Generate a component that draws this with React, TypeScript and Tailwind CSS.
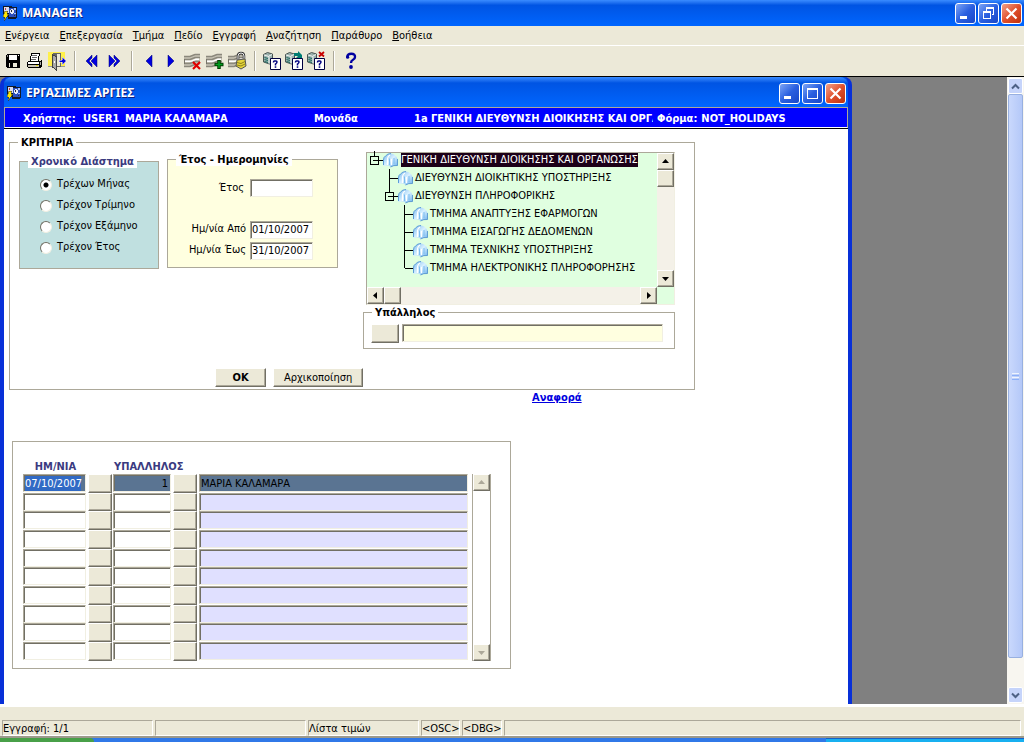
import type { ReactNode } from "react";

const raised =
  "bg-[#ece9d8] border border-t-white border-l-white border-r-[#716f64] border-b-[#716f64] shadow-[inset_-1px_-1px_0_#aca899]";
const sunken =
  "border border-t-[#aca899] border-l-[#aca899] border-r-[#f1efe2] border-b-[#f1efe2] shadow-[inset_1px_1px_0_#716f64] outline-none";

const menus = ["Ενέργεια", "Επεξεργασία", "Τμήμα", "Πεδίο", "Εγγραφή", "Αναζήτηση", "Παράθυρο", "Βοήθεια"];

const periods = ["Τρέχων Μήνας", "Τρέχον Τρίμηνο", "Τρέχον Εξάμηνο", "Τρέχον Έτος"];

const treeItems = [
  { label: "ΓΕΝΙΚΗ ΔΙΕΥΘΥΝΣΗ ΔΙΟΙΚΗΣΗΣ ΚΑΙ ΟΡΓΑΝΩΣΗΣ", level: 0, open: true },
  { label: "ΔΙΕΥΘΥΝΣΗ ΔΙΟΙΚΗΤΙΚΗΣ ΥΠΟΣΤΗΡΙΞΗΣ", level: 1 },
  { label: "ΔΙΕΥΘΥΝΣΗ ΠΛΗΡΟΦΟΡΙΚΗΣ", level: 1, open: true },
  { label: "ΤΜΗΜΑ ΑΝΑΠΤΥΞΗΣ ΕΦΑΡΜΟΓΩΝ", level: 2 },
  { label: "ΤΜΗΜΑ ΕΙΣΑΓΩΓΗΣ ΔΕΔΟΜΕΝΩΝ", level: 2 },
  { label: "ΤΜΗΜΑ ΤΕΧΝΙΚΗΣ ΥΠΟΣΤΗΡΙΞΗΣ", level: 2 },
  { label: "ΤΜΗΜΑ ΗΛΕΚΤΡΟΝΙΚΗΣ ΠΛΗΡΟΦΟΡΗΣΗΣ", level: 2, last: true },
];

const rows = Array.from({ length: 10 }, (_, i) =>
  i === 0 ? { date: "07/10/2007", id: "1", name: "ΜΑΡΙΑ ΚΑΛΑΜΑΡΑ" } : { date: "", id: "", name: "" }
);

const AppIcon = () => (
  <svg width="16" height="16" viewBox="0 0 16 16" shapeRendering="crispEdges">
    <path d="M1 1h9v1h5v11h-1v1H6v-2H2V9H1z" fill="#101828" />
    <path d="M2 2h5v6H2z" fill="#d8dcf0" />
    <path d="M7 3h7v9H7z" fill="#2c50c0" />
    <path d="M9 4h2v1h1v3h-1v1H9V8H8V5h1z" fill="#e8ecf8" />
    <path d="M9 5h1v2H9zM12 10h1v1h-1z" fill="#30303c" />
    <path d="M12 3h2v2h-2zM12 8h2v1h-2z" fill="#a8c0f8" />
    <path d="M3 3h1v2H3z" fill="#c04040" />
    <path d="M3 6h3L5 9h2l-5 7 1-4H1z" fill="#ffe600" stroke="#333" strokeWidth="0.5" />
  </svg>
);

const SaveIcon = () => (
  <svg width="20" height="20" viewBox="0 0 20 20" shapeRendering="crispEdges">
    <path d="M4 3h12l1 1v12l-1 1H4l-1-1V4z" fill="#000" />
    <path d="M6 4h8v5H6z" fill="#fff" />
    <path d="M15 4h1v1h-1z" fill="#fff" />
    <path d="M6 12h8v4H6z" fill="#ece9d8" />
    <path d="M7 12h3v4H7z" fill="#000" />
    <path d="M4 4h1v2H4z" fill="#888" />
  </svg>
);

const PrintIcon = () => (
  <svg width="20" height="20" viewBox="0 0 20 20" shapeRendering="crispEdges">
    <path d="M6.500 2.500h8l-1.500 8h-8z" fill="#fff" stroke="#000" />
    <path d="M7 4.500h5M7 6.500h5M6 8.500h5" stroke="#666" />
    <path d="M3 10h12l2-2v7l-2 2H3l-1-1v-5z" fill="#000" />
    <path d="M3 11h11v2H3z" fill="#fff" />
    <path d="M3 14h11v2H3z" fill="#c8c4b4" />
    <path d="M15 11h1v3h-1z" fill="#aaa" />
    <path d="M11 14h2v1h-2z" fill="#e5d800" />
  </svg>
);

const ExitIcon = () => (
  <svg width="20" height="20" viewBox="0 0 20 20" shapeRendering="crispEdges">
    <path d="M1 1h17v14H1z" fill="#fff04a" />
    <path d="M6 2h8v14H6z" fill="#666" />
    <path d="M10 3h3v12h-3z" fill="#ece9d8" />
    <path d="M5.500 3.500l4 2.500v13l-4-3z" fill="#a9a9a9" stroke="#444" />
    <path d="M7 10h1v2H7z" fill="#fff" />
    <path d="M1 15h4v1H1zM14 15h4v1h-4z" fill="#999" />
    <path d="M12 9h3V6l4 4-4 4v-3h-3z" fill="#0000d8" stroke="#fff" strokeWidth="0.5" />
  </svg>
);

const ArrowIcon = ({ dir, double }: { dir: "left" | "right"; double?: boolean }) => (
  <svg width="20" height="20" viewBox="0 0 20 20" className={dir === "right" ? "-scale-x-100" : ""}>
    {double ? (
      <g>
        <path d="M10 4v3l-3 3 3 3v3l-6-6z" fill="#0000e0" stroke="#000070" strokeWidth="0.5" />
        <path d="M15 4v12l-6-6z" fill="#0000e0" stroke="#000070" strokeWidth="0.5" />
      </g>
    ) : (
      <path d="M13 4v12l-6-6z" fill="#0000e0" stroke="#000070" strokeWidth="0.5" />
    )}
  </svg>
);

const RecordIcon = ({ kind }: { kind: "delete" | "insert" | "lock" }) => (
  <svg width="20" height="20" viewBox="0 0 20 20">
    <path d="M1 5h6l5-2h5v11l-6 1-4 1H1z" fill="#c8c4b6" />
    <path d="M1 5.500h6l5-2h5M1 8.500h6l5-2h5M1 12.500h6l5-2h5M1 15.500h6l5-2" fill="none" stroke="#8b887c" strokeWidth="1.500" />
    <path d="M2 9.500h6l5-2h3v1.500h-3l-5 2H2z" fill="#fff" />
    <path d="M1.500 8v5" stroke="#77746a" />
    {kind === "delete" && <path d="M10 11l7 7M17 11l-7 7" stroke="#e00000" strokeWidth="2.200" />}
    {kind === "insert" && (
      <g>
        <path d="M14 9v9M9.500 13.500h9" stroke="#003c00" strokeWidth="3.500" />
        <path d="M14 10v7M10.500 13.500h7" stroke="#00a020" strokeWidth="1.500" />
      </g>
    )}
    {kind === "lock" && (
      <g>
        <path d="M11 9V5q0-3 3-3t3 3v4" fill="none" stroke="#333" strokeWidth="2.500" />
        <path d="M11 9V5q0-3 3-3t3 3v4" fill="none" stroke="#eee" />
        <path d="M10 9l8-1 1 7-5 3-5-3z" fill="#e5d43a" stroke="#555" />
        <path d="M10 11.500l4 1 4-2M10 14l4 1 4-2" fill="none" stroke="#8b801a" />
      </g>
    )}
  </svg>
);

const QueryIcon = ({ mark }: { mark?: "run" | "cancel" }) => (
  <svg width="20" height="20" viewBox="0 0 20 20">
    <path d="M1.500 3.500l4-2 5 1.500v8l-3 2-6-2z" fill="#9ab0ac" stroke="#4a5552" />
    <path d="M2 4l5 1.500v7M7 5l3-1.500" fill="none" stroke="#eef4f2" />
    <path d="M2.500 6.500l3.500 1M2.500 8.500l3.500 1M2.500 10.500l3.500 1" stroke="#1c6b62" />
    {mark === "run" && <path d="M10 2h4V0l4 4v3h-6l2-2h-4z" fill="#007d72" />}
    {mark === "cancel" && <path d="M13 1l5 4.500M18 1l-5 4.500" stroke="#c80000" strokeWidth="1.800" />}
    <path d="M8.500 7.500h10v11h-10z" fill="#fff" stroke="#000040" />
    <path d="M11.500 11.500v-.5q0-1 1-1h1.500q1 0 1 1t-1.500 2v1.500" fill="none" stroke="#000080" strokeWidth="1.500" />
    <path d="M12.700 15.300h1.600v1.500h-1.600z" fill="#000080" />
  </svg>
);

const HelpIcon = () => (
  <svg width="20" height="20" viewBox="0 0 20 20">
    <path d="M6.300 6q0-3.300 4-3.300T14 6q0 1.800-2 2.800t-2 3.200" fill="none" stroke="#0000a0" strokeWidth="2.400" />
    <circle cx="6.600" cy="6.200" r="1.600" fill="#0000a0" />
    <circle cx="10" cy="16" r="1.900" fill="#0000a0" />
  </svg>
);

const FolderIcon = () => (
  <svg width="15" height="16" viewBox="0 0 15 16">
    <defs>
      <linearGradient id="leaf" x1="0" y1="0" x2="1" y2="1">
        <stop offset="0" stopColor="#7ebcf0" />
        <stop offset="0.5" stopColor="#d8f0ff" />
        <stop offset="1" stopColor="#6cb0ec" />
      </linearGradient>
    </defs>
    <path d="M0.500 14V8q0-3 2-4 2-2.500 5.500-2.500Q13 2 14.500 7v6.500q-4-.5-7 1.500-1-1.500-3-1.500z" fill="url(#leaf)" />
    <path d="M0.500 13V8q0-3 2-4Q4.500 1.500 8 1.500" fill="none" stroke="#5a9cd8" />
    <path d="M4.500 13V6.500Q5 4 7 3M8.500 13V7" fill="none" stroke="#fff" strokeWidth="1.200" />
    <path d="M6.500 13V6.500M11 12V6" fill="none" stroke="#7cbcf0" />
    <path d="M7.500 15q3-2 7-1.500V7" fill="none" stroke="#4a8ccc" strokeWidth="0.800" />
  </svg>
);

const ToolButton = ({ label, children }: { label: string; children: ReactNode }) => (
  <button type="button" aria-label={label} className="flex w-[22px] justify-center">
    {children}
  </button>
);

const Separator = () => (
  <div className="flex w-[13px] justify-center">
    <div className="h-5 w-[2px] border-l border-[#aca899] bg-white" />
  </div>
);

const CaptionButton = ({ kind }: { kind: "min" | "restore" | "max" | "close" }) => (
  <button
    type="button"
    aria-label={kind}
    className={
      kind === "close"
        ? "size-[21px] rounded-[3px] border border-white bg-linear-to-br from-[#f0a088] via-[#e0502c] to-[#c03008]"
        : "size-[21px] rounded-[3px] border border-white bg-linear-to-br from-[#7da4f5] via-[#2a5fe0] to-[#1846c8]"
    }
  >
    <svg width="19" height="19" viewBox="0 0 19 19" fill="none" stroke="#fff">
      {kind === "min" && <path d="M4 13.500h7" strokeWidth="3" />}
      {kind === "restore" && (
        <g shapeRendering="crispEdges">
          <path d="M4.500 8.500h7v6h-7zM7.500 7V4.500h7v6H13" />
          <path d="M4 8h8M7 4h8" strokeWidth="2" />
        </g>
      )}
      {kind === "max" && (
        <g shapeRendering="crispEdges">
          <path d="M4.500 4.500h10v10h-10z" />
          <path d="M4 5h11" strokeWidth="2" />
        </g>
      )}
      {kind === "close" && <path d="M4.500 4.500l10 10M14.500 4.500l-10 10" strokeWidth="2.200" />}
    </svg>
  </button>
);

const ScrollButton = ({ dir, muted }: { dir: "up" | "down" | "left" | "right"; muted?: boolean }) => {
  const shapes = { up: "M4 9h7L7.500 5z", down: "M4 6h7L7.500 10z", left: "M9 4v7L5 7.500z", right: "M6 4v7l4-3.500z" };
  return (
    <button type="button" aria-label={dir} className={`flex h-[17px] min-w-[17px] items-center justify-center ${raised}`}>
      <svg width="15" height="15" viewBox="0 0 15 15">
        <path d={shapes[dir]} fill={muted ? "#aca899" : "#000"} />
      </svg>
    </button>
  );
};

// Connector lines to the left of a tree node, each level 15px deeper
const Branch = ({ level, open, last }: { level: number; open?: boolean; last?: boolean }) => {
  const x = 7.5 + level * 15;
  const width = 16 + level * 15;
  return (
    <svg width={width} height="18" viewBox={`0 0 ${width} 18`} fill="none" stroke="#000" shapeRendering="crispEdges">
      <path d={`M${x} 0V${last || open ? 9 : 18}M${x} 9.500H${width}`} />
      {open && (
        <g>
          <path d={`M${x - 4} 5.500h8v8h-8z`} fill="#e0ffe0" />
          <path d={`M${x - 2} 9.500h5`} />
        </g>
      )}
    </svg>
  );
};

const Tree = () => (
  <div className="ml-[3px] flex h-[153px] flex-col border border-t-[#aca899] border-l-[#aca899] border-r-[#f1efe2] border-b-[#f1efe2] bg-[#e0ffe0]">
    <div className="flex min-h-0 flex-1">
      <ul role="tree" className="-mt-[2px] min-w-0 flex-1 overflow-hidden whitespace-nowrap">
        {treeItems.map((item) => (
          <li key={item.label} role="treeitem" className="flex h-[18px] items-center">
            <Branch level={item.level} open={item.open} last={item.last} />
            <FolderIcon />
            <span className={item.level === 0 ? "ml-[3px] bg-[#1c0018] leading-[14px] text-white" : "ml-[2px] leading-[14px]"}>
              {item.label}
            </span>
          </li>
        ))}
      </ul>
      <div className="flex w-[17px] flex-col bg-[#f4f1e8]">
        <ScrollButton dir="up" />
        <div className={`h-[17px] ${raised}`} />
        <div className="flex-1" />
        <ScrollButton dir="down" />
      </div>
    </div>
    <div className="mr-[17px] flex h-[17px] bg-[#f4f1e8]">
      <ScrollButton dir="left" />
      <div className={`w-[17px] ${raised}`} />
      <div className="flex-1" />
      <ScrollButton dir="right" />
    </div>
  </div>
);

const Criteria = () => (
  <fieldset className="ml-[5px] w-[686px] border border-[#aca899]">
    <legend className="ml-2 px-[3px] leading-[13px] font-bold">ΚΡΙΤΗΡΙΑ</legend>
    <div className="flex">
      <div className="flex w-[353px] flex-col pb-[2px]">
        <div className="flex items-start gap-2 pl-[9px]">
          <fieldset className="mt-[6px] h-[114px] w-[140px] border border-[#aca899] bg-[#c0e0e0]">
            <legend className="ml-2 bg-white px-[3px] leading-[13px] font-bold text-[#3a3a80]">Χρονικό Διάστημα</legend>
            <div className="flex flex-col pt-[6px] pl-5">
              {periods.map((period, i) => (
                <label key={period} className="flex h-[21px] items-center gap-[5px]">
                  <input
                    type="radio"
                    name="period"
                    defaultChecked={i === 0}
                    className="size-3 appearance-none rounded-full border border-t-[#716f64] border-l-[#716f64] border-r-[#f1efe2] border-b-[#f1efe2] bg-white checked:bg-[radial-gradient(circle,#000_2px,#fff_3px)]"
                  />
                  {period}
                </label>
              ))}
            </div>
          </fieldset>
          <fieldset className="mt-1 h-[115px] w-[171px] border border-[#aca899] bg-[#ffffe0]">
            <legend className="ml-2 bg-white px-[3px] leading-[13px] font-bold">Έτος - Ημερομηνίες</legend>
            <div className="flex flex-col pt-[13px] pr-6">
              <label className="mb-[22px] flex h-[18px] items-center justify-end gap-[6px]">
                Έτος
                <input className={`h-[18px] w-[63px] bg-white px-[2px] ${sunken}`} />
              </label>
              <label className="flex h-[21px] items-center justify-end gap-1 whitespace-nowrap">
                Ημ/νία Από
                <input defaultValue="01/10/2007" className={`h-[18px] w-[63px] bg-white pl-px ${sunken}`} />
              </label>
              <label className="flex h-[21px] items-center justify-end gap-1 whitespace-nowrap">
                Ημ/νία Έως
                <input defaultValue="31/10/2007" className={`h-[18px] w-[63px] bg-white pl-px ${sunken}`} />
              </label>
            </div>
          </fieldset>
        </div>
        <div className="mt-auto flex gap-[7px] pl-[205px]">
          <button type="button" className={`h-[19px] w-[52px] leading-none font-bold ${raised}`}>OK</button>
          <button type="button" className={`h-[19px] w-[91px] leading-none ${raised}`}>Αρχικοποίηση</button>
        </div>
      </div>
      <div className="w-[312px] pt-[3px] pb-10">
        <Tree />
        <fieldset className="mt-px h-[43px] border border-[#aca899]">
          <legend className="ml-2 px-[3px] leading-[13px] font-bold">Υπάλληλος</legend>
          <div className="flex gap-[3px] pt-[5px] pl-[7px]">
            <button type="button" aria-label="Επιλογή υπαλλήλου" className={`h-[19px] w-7 ${raised}`} />
            <input aria-label="Υπάλληλος" className={`h-[18px] w-[261px] bg-[#ffffe0] px-1 ${sunken}`} />
          </div>
        </fieldset>
      </div>
    </div>
  </fieldset>
);

const Records = () => (
  <div className="ml-2 flex h-[228px] w-[499px] items-start gap-1 border border-[#aca899] pt-[17px] pl-[10px]">
    <table className="w-[445px] table-fixed border-collapse">
      <colgroup>
        <col className="w-[65px]" />
        <col className="w-[25px]" />
        <col className="w-[60px]" />
        <col className="w-[26px]" />
        <col />
      </colgroup>
      <thead>
        <tr className="h-[15px] leading-[13px] text-[#3a3a80]">
          <th scope="col" className="p-0">ΗΜ/ΝΙΑ</th>
          <th className="p-0" />
          <th scope="col" colSpan={2} className="p-0 pl-px text-left whitespace-nowrap">ΥΠΑΛΛΗΛΟΣ</th>
          <th className="p-0" />
        </tr>
      </thead>
      <tbody>
        {rows.map((row, i) => {
          const height = i % 3 === 1 ? "h-[18px]" : "h-[19px]";
          const current = i === 0;
          return (
            <tr key={i} className={`align-top ${height}`}>
              <td className="p-0">
                <input
                  aria-label="ΗΜ/ΝΙΑ"
                  defaultValue={row.date}
                  className={`block h-[18px] w-[63px] pl-px ${sunken} ${
                    current ? "bg-[linear-gradient(to_right,#316ac5_57px,#5a7492_57px)] text-white" : "bg-white"
                  }`}
                />
              </td>
              <td className="p-0">
                <button type="button" aria-label="Επιλογή ημερομηνίας" className={`block w-6 ${height} ${raised}`} />
              </td>
              <td className="p-0">
                <input
                  aria-label="ΥΠΑΛΛΗΛΟΣ"
                  defaultValue={row.id}
                  className={`block h-[18px] w-[58px] pr-[2px] text-right ${sunken} ${current ? "bg-[#5a7492]" : "bg-white"}`}
                />
              </td>
              <td className="p-0">
                <button type="button" aria-label="Επιλογή υπαλλήλου" className={`block w-6 ${height} ${raised}`} />
              </td>
              <td className="p-0">
                <input
                  aria-label="Ονοματεπώνυμο"
                  defaultValue={row.name}
                  className={`block h-[18px] w-full pl-px ${sunken} ${current ? "bg-[#5a7492]" : "bg-[#e0e0ff]"}`}
                />
              </td>
            </tr>
          );
        })}
      </tbody>
    </table>
    <div className="mt-[15px] flex h-[187px] w-[19px] flex-col border-x border-[#aca899] bg-white">
      <ScrollButton dir="up" muted />
      <div className="flex-1" />
      <ScrollButton dir="down" muted />
    </div>
  </div>
);

const DesktopScrollbar = () => (
  <div className="flex w-[17px] flex-col bg-[#f8f6f0] p-px">
    <button type="button" aria-label="Πάνω" className="flex h-4 items-center justify-center rounded-[2px] border border-white bg-[#c6d4fa]">
      <svg width="9" height="7" viewBox="0 0 9 7" fill="none" stroke="#4d6185" strokeWidth="2">
        <path d="M1 5.500l3.500-3.500L8 5.500" />
      </svg>
    </button>
    <div className="flex h-[564px] flex-col items-center justify-center gap-px rounded-[2px] border border-[#98b0e0] bg-linear-to-r from-[#c9d8fc] to-[#b4c8f8]">
      <div className="h-px w-[7px] bg-[#eef4fe]" />
      <div className="h-px w-[7px] bg-[#8cb0f8]" />
      <div className="h-px w-[7px] bg-[#eef4fe]" />
      <div className="h-px w-[7px] bg-[#8cb0f8]" />
    </div>
    <button type="button" aria-label="Κάτω" className="mt-auto flex h-4 items-center justify-center rounded-[2px] border border-white bg-[#c6d4fa]">
      <svg width="9" height="7" viewBox="0 0 9 7" fill="none" stroke="#4d6185" strokeWidth="2">
        <path d="M1 1.500L4.500 5 8 1.500" />
      </svg>
    </button>
  </div>
);

const statusCell = "h-4 border border-t-[#aca899] border-l-[#aca899] border-r-white border-b-white leading-[15px] whitespace-nowrap";

const StatusBar = () => (
  <footer className="border-t-[3px] border-white bg-[#ece9d8]">
    <div className="flex gap-[2px] border-b-2 border-[#9d9a8c] pt-[13px] pr-[3px] pl-[2px]">
      <div className={`w-[151px] ${statusCell}`}>Εγγραφή: 1/1</div>
      <div className={`w-[151px] ${statusCell}`} />
      <div className={`w-[111px] ${statusCell}`}>Λίστα τιμών</div>
      <div className={`w-[39px] ${statusCell}`}>&lt;OSC&gt;</div>
      <div className={`w-[40px] ${statusCell}`}>&lt;DBG&gt;</div>
      <div className={`flex-1 ${statusCell}`} />
    </div>
    <div className="flex h-1 bg-[#3078e8]">
      <div className="w-[94px] rounded-tr-sm bg-[#48a048]" />
      <div className="flex-1" />
      <div className="w-[198px] border-t border-[#1560c8] bg-[#18b0f0]" />
    </div>
  </footer>
);

export default function App() {
  return (
    <div className="flex h-screen flex-col overflow-hidden bg-[#ece9d8] font-['DejaVu_Sans_Condensed','DejaVu_Sans',sans-serif] text-[11px] text-black">
      <header className="flex h-[26px] shrink-0 items-center gap-1 bg-linear-to-b from-[#3a8cff] via-[#0054e3] via-20% to-[#0066ff] pr-[2px] pl-[2px]">
        <AppIcon />
        <h1 className="flex-1 font-['Noto_Sans',sans-serif] text-xs font-bold text-white [text-shadow:1px_1px_#0f1f80]">MANAGER</h1>
        <div className="flex gap-[2px]">
          <CaptionButton kind="min" />
          <CaptionButton kind="restore" />
          <CaptionButton kind="close" />
        </div>
      </header>

      <nav className="flex h-5 shrink-0 items-center gap-[10px] border-b border-white pt-px pl-[5px]">
        {menus.map((menu) => (
          <button key={menu} type="button">
            <span className="underline underline-offset-1">{menu[0]}</span>
            {menu.slice(1)}
          </button>
        ))}
      </nav>

      <div className="flex h-[31px] shrink-0 items-center border-b border-black pl-[2px]">
        <ToolButton label="Αποθήκευση"><SaveIcon /></ToolButton>
        <ToolButton label="Εκτύπωση"><PrintIcon /></ToolButton>
        <ToolButton label="Έξοδος"><ExitIcon /></ToolButton>
        <Separator />
        <ToolButton label="Προηγούμενο τμήμα"><ArrowIcon dir="left" double /></ToolButton>
        <ToolButton label="Επόμενο τμήμα"><ArrowIcon dir="right" double /></ToolButton>
        <Separator />
        <ToolButton label="Προηγούμενη εγγραφή"><ArrowIcon dir="left" /></ToolButton>
        <ToolButton label="Επόμενη εγγραφή"><ArrowIcon dir="right" /></ToolButton>
        <ToolButton label="Διαγραφή"><RecordIcon kind="delete" /></ToolButton>
        <ToolButton label="Εισαγωγή"><RecordIcon kind="insert" /></ToolButton>
        <ToolButton label="Κλείδωμα"><RecordIcon kind="lock" /></ToolButton>
        <Separator />
        <ToolButton label="Αναζήτηση"><QueryIcon /></ToolButton>
        <ToolButton label="Εκτέλεση"><QueryIcon mark="run" /></ToolButton>
        <ToolButton label="Ακύρωση"><QueryIcon mark="cancel" /></ToolButton>
        <Separator />
        <ToolButton label="Βοήθεια"><HelpIcon /></ToolButton>
      </div>

      <div className="flex min-h-0 flex-1 bg-[#808080]">
        <div className="flex min-w-0 flex-1 overflow-hidden">
          <section className="flex w-[852px] shrink-0 flex-col rounded-t-lg border-x-4 border-[#0830d8] bg-[#0054e3]">
            <header className="flex h-[30px] shrink-0 items-center gap-1 rounded-t-lg bg-linear-to-b from-[#3a8cff] via-[#0054e3] via-20% to-[#0066ff] pt-[2px] pr-[2px] pl-[2px]">
              <AppIcon />
              <h2 className="flex-1 font-['Noto_Sans',sans-serif] text-xs font-bold text-white [text-shadow:1px_1px_#0f1f80]">
                ΕΡΓΑΣΙΜΕΣ ΑΡΓΙΕΣ
              </h2>
              <div className="flex gap-[2px]">
                <CaptionButton kind="min" />
                <CaptionButton kind="max" />
                <CaptionButton kind="close" />
              </div>
            </header>
            <div className="flex h-[21px] shrink-0 items-center border border-[#aca899] border-b-white bg-[#0000ff] pt-[3px] pl-[18px] font-bold whitespace-nowrap text-white">
              <span className="w-[60px]">Χρήστης:</span>
              <span className="w-[42px]">USER1</span>
              <span className="w-[189px]">ΜΑΡΙΑ ΚΑΛΑΜΑΡΑ</span>
              <span className="w-[100px]">Μονάδα</span>
              <span className="w-[239px] overflow-hidden">1a ΓΕΝΙΚΗ ΔΙΕΥΘΥΝΣΗ ΔΙΟΙΚΗΣΗΣ ΚΑΙ ΟΡΓΑΝΩΣΗΣ</span>
              <span className="mr-1 ml-1">Φόρμα:</span>
              <span>NOT_HOLIDAYS</span>
            </div>
            <main className="min-h-0 flex-1 border-t border-black bg-white pt-[7px]">
              <Criteria />
              <a href="#report" className="mt-px ml-[528px] block w-fit leading-[14px] font-bold text-[#0000e0] underline">
                Αναφορά
              </a>
              <div className="pt-9">
                <Records />
              </div>
            </main>
          </section>
        </div>
        <DesktopScrollbar />
      </div>

      <StatusBar />
    </div>
  );
}
